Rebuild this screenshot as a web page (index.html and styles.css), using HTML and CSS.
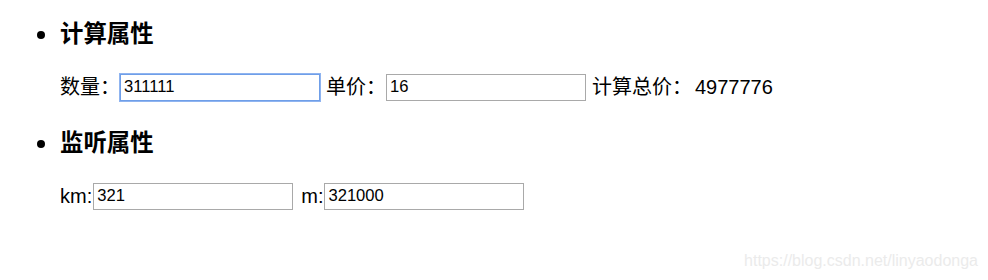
FILE: index.html
```html
<!DOCTYPE html>
<html lang="zh-CN">
<head>
<meta charset="utf-8">
<title>计算属性与监听属性</title>
<link rel="stylesheet" href="styles.css">
</head>
<body>
<ul class="list">
  <li class="item">
    <h3 class="title">计算属性</h3>
    <div class="row">
      <span class="label">数量：</span>
      <input class="field focused" type="text" value="311111">
      <span class="label gap">单价：</span>
      <input class="field" type="text" value="16">
      <span class="label gap">计算总价：</span>
      <span class="total">4977776</span>
    </div>
  </li>
  <li class="item second">
    <h3 class="title">监听属性</h3>
    <div class="row">
      <span class="label">km:</span>
      <input class="field tight" type="text" value="321">
      <span class="label gap-wide">m:</span>
      <input class="field tight" type="text" value="321000">
    </div>
  </li>
</ul>
<div class="watermark">https://blog.csdn.net/linyaodonga</div>
</body>
</html>
```
FILE: styles.css
```css
html, body {
  margin: 0;
  padding: 0;
  background: #ffffff;
}
body {
  width: 988px;
  height: 280px;
  position: relative;
  overflow: hidden;
  font-family: "Liberation Sans", "Noto Sans CJK SC", sans-serif;
  font-size: 20px;
  color: #000000;
}
.list {
  margin: 0;
  padding: 20px 0 0 37px;
  list-style: none;
}
.item {
  display: grid;
  grid-template-columns: 8px auto;
  column-gap: 15px;
  justify-content: start;
}
.item::before {
  content: "";
  grid-column: 1;
  grid-row: 1;
  align-self: center;
  width: 8px;
  height: 8px;
  margin-top: 1px;
  border-radius: 50%;
  background: #000000;
}
.second {
  margin-top: 28.5px;
}
.title {
  grid-column: 2;
  grid-row: 1;
  margin: 0 0 25.5px;
  font-size: 23.4px;
  line-height: 28px;
  font-weight: bold;
}
.item::before {
  margin-bottom: 25.5px;
}
.row {
  grid-column: 2;
  grid-row: 2;
  display: flex;
  align-items: center;
  height: 27px;
  line-height: 27px;
  white-space: nowrap;
}
.label {
  display: block;
}
.gap {
  margin-left: 6px;
}
.gap-wide {
  margin-left: 8px;
}
.total {
  margin-left: 3px;
}
.field {
  box-sizing: border-box;
  width: 200px;
  height: 27px;
  margin: 0;
  padding: 1px 3px;
  border: 1px solid #a9a9a9;
  border-radius: 0;
  font-family: "Liberation Sans", "Noto Sans CJK SC", sans-serif;
  font-size: 16.6px;
  color: #000000;
  background: #ffffff;
  outline: none;
}
.focused {
  border-color: #6f9ee8;
  box-shadow: 0 0 0 1px #8fb4f0;
}
.tight {
  margin-left: 1px;
}
.watermark {
  position: absolute;
  right: 10px;
  bottom: 10px;
  font-size: 16px;
  line-height: 18px;
  color: #ebebeb;
  font-family: "Liberation Sans", sans-serif;
}
```
